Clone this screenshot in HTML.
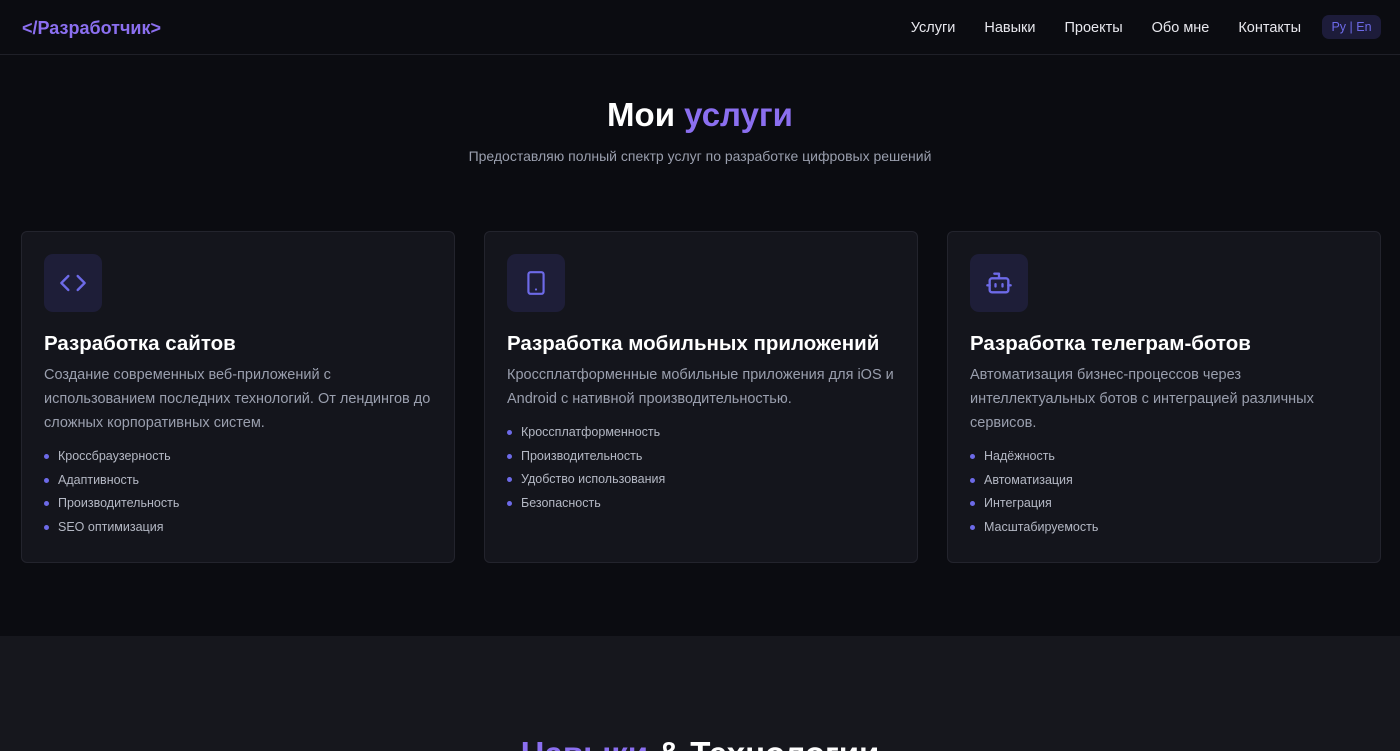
<!DOCTYPE html>
<html><head><meta charset="utf-8"><style>
*{margin:0;padding:0;box-sizing:border-box}
html,body{width:1400px;height:751px;overflow:hidden}
body{background:#0b0c11;font-family:"Liberation Sans",sans-serif;color:#fff;position:relative}
nav{height:55px;border-bottom:1px solid #1f2028;position:relative}
.logo{position:absolute;left:22px;top:18px;font-weight:bold;font-size:18px;color:#8b6ff0}
.links{position:absolute;right:99px;top:20px;font-size:14.5px;color:#e8e8ee}
.links span{margin-left:29px}
.lang{position:absolute;left:1322px;top:15px;width:59px;height:24px;border-radius:7px;background:#1d1c3a;color:#6d6ae8;font-size:12.5px;line-height:24px;text-align:center}
h2{position:absolute;top:96px;width:100%;text-align:center;font-size:33px;font-weight:bold}
.acc{color:#8b6ff0}
.sub{position:absolute;top:148px;width:100%;text-align:center;font-size:14px;color:#9a9fae}
.card{position:absolute;top:231px;width:434px;height:332px;background:#14151c;border:1px solid #23242d;border-radius:6px}
.ic{position:absolute;left:22px;top:22px;width:58px;height:58px;border-radius:9px;background:#1e1e38;display:flex;align-items:center;justify-content:center}
.t{position:absolute;left:22px;top:100px;font-size:20.5px;font-weight:bold;white-space:nowrap}
.d{position:absolute;left:22px;top:131px;width:400px;font-size:14.5px;line-height:24px;color:#9a9fae}
ul{position:absolute;left:22px;list-style:none;font-size:12.5px;line-height:23.5px;color:#b4b8c4}
li{padding-left:14px;position:relative}
li:before{content:"";position:absolute;left:0;top:9px;width:5px;height:5px;border-radius:50%;background:#6d6ae8}
.s2{position:absolute;top:636px;left:0;width:1400px;height:115px;background:#16171d;overflow:hidden}
.s2 h3{position:absolute;top:99px;width:100%;text-align:center;font-size:33px;font-weight:bold}
</style></head><body>
<nav><div class="logo">&lt;/Разработчик&gt;</div>
<div class="links"><span>Услуги</span><span>Навыки</span><span>Проекты</span><span>Обо мне</span><span>Контакты</span></div>
<div class="lang">Ру <span style="color:#6d6ae8">|</span> En</div></nav>
<h2>Мои <span class="acc">услуги</span></h2>
<div class="sub">Предоставляю полный спектр услуг по разработке цифровых решений</div>

<div class="card" style="left:21px"><div class="ic"><svg width="28" height="28" viewBox="0 0 24 24" fill="none" stroke="#6d6ae8" stroke-width="2" stroke-linecap="round" stroke-linejoin="round"><path d="M8 6l-6 6 6 6M16 6l6 6-6 6"/></svg></div>
<div class="t">Разработка сайтов</div>
<div class="d">Создание современных веб-приложений с использованием последних технологий. От лендингов до сложных корпоративных систем.</div>
<ul style="top:213px"><li>Кроссбраузерность</li><li>Адаптивность</li><li>Производительность</li><li>SEO оптимизация</li></ul></div>

<div class="card" style="left:484px"><div class="ic"><svg width="26" height="26" viewBox="0 0 24 24" fill="none" stroke="#6d6ae8" stroke-width="2" stroke-linecap="round"><rect x="5" y="2" width="14" height="20" rx="2"/><path d="M12 18h.01"/></svg></div>
<div class="t">Разработка мобильных приложений</div>
<div class="d">Кроссплатформенные мобильные приложения для iOS и Android с нативной производительностью.</div>
<ul style="top:189px"><li>Кроссплатформенность</li><li>Производительность</li><li>Удобство использования</li><li>Безопасность</li></ul></div>

<div class="card" style="left:947px"><div class="ic"><svg width="28" height="28" viewBox="0 0 24 24" fill="none" stroke="#6d6ae8" stroke-width="2" stroke-linecap="round" stroke-linejoin="round"><path d="M12 8V4H8"/><rect x="4" y="8" width="16" height="12" rx="2"/><path d="M2 14h2M20 14h2M15 13v2M9 13v2"/></svg></div>
<div class="t">Разработка телеграм-ботов</div>
<div class="d">Автоматизация бизнес-процессов через интеллектуальных ботов с интеграцией различных сервисов.</div>
<ul style="top:213px"><li>Надёжность</li><li>Автоматизация</li><li>Интеграция</li><li>Масштабируемость</li></ul></div>

<div class="s2"><h3><span class="acc">Навыки</span> &amp; Технологии</h3></div>
</body></html>
